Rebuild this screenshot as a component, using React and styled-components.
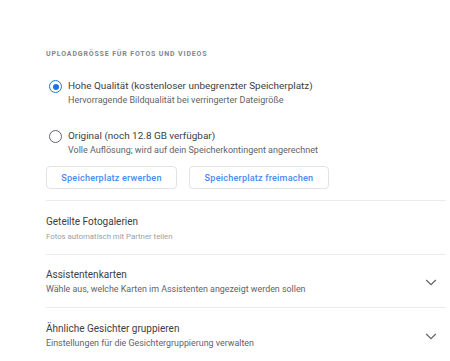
import React, { useState } from 'react';
import styled, { createGlobalStyle } from 'styled-components';

const GlobalStyle = createGlobalStyle`
  body {
    margin: 0;
    background: #ffffff;
    font-family: Roboto, "Liberation Sans", Arial, sans-serif;
  }
`;

const Page = styled.div`
  width: 450px;
  height: 361px;
  overflow: hidden;
  background: #fff;
  padding: 48px 4px 0 46px;
  box-sizing: border-box;
`;

const SectionTitle = styled.div`
  font-size: 7px;
  font-weight: 700;
  letter-spacing: 0.85px;
  color: #80868b;
  text-transform: uppercase;
  line-height: 12px;
`;

const OptionList = styled.div`
  display: flex;
  flex-direction: column;
  gap: 22px;
  margin-top: 18px;
`;

const Option = styled.label`
  display: flex;
  align-items: flex-start;
  gap: 6px;
  cursor: pointer;
`;

const Radio = styled.span`
  width: 13px;
  height: 13px;
  margin: 2px 0 0 3px;
  box-sizing: border-box;
  border-radius: 50%;
  border: 1.5px solid ${props => props.checked ? '#1a73e8' : '#5f6368'};
  display: flex;
  align-items: center;
  justify-content: center;
  flex-shrink: 0;

  &::after {
    content: '';
    width: 6px;
    height: 6px;
    border-radius: 50%;
    background: ${props => props.checked ? '#1a73e8' : 'transparent'};
  }
`;

const OptionText = styled.div`
  display: flex;
  flex-direction: column;
`;

const OptionTitle = styled.span`
  font-size: 9.95px;
  line-height: 16px;
  color: #3c4043;
`;

const OptionSub = styled.span`
  font-size: 9px;
  line-height: 12px;
  color: #5f6368;
`;

const Buttons = styled.div`
  display: flex;
  gap: 12px;
  margin-top: 10px;
  padding-bottom: 11px;
  border-bottom: 1px solid #ebebeb;
`;

const OutlineButton = styled.button`
  height: 23px;
  padding: 0;
  border: 1px solid #e3e3e3;
  border-radius: 4px;
  background: #fff;
  color: #4a89f3;
  font-family: inherit;
  font-size: 9.1px;
  font-weight: 500;
  letter-spacing: 0.2px;
  cursor: pointer;
`;

const SettingRow = styled.div`
  display: flex;
  align-items: center;
  justify-content: space-between;
  padding: ${props => props.top}px 0 11px;
  border-bottom: ${props => props.last ? 'none' : '1px solid #ebebeb'};
`;

const SettingText = styled.div`
  display: flex;
  flex-direction: column;
`;

const SettingTitle = styled.span`
  font-size: 10px;
  line-height: 16px;
  color: #3c4043;
`;

const SettingSub = styled.span`
  font-size: ${props => props.small ? 7.8 : 8.9}px;
  line-height: 13px;
  color: ${props => props.light ? '#9aa0a6' : '#5f6368'};
`;

const Chevron = styled.svg`
  width: 12px;
  height: 12px;
  margin-right: 9px;
  flex-shrink: 0;
`;

const ChevronDown = () => (
  <Chevron viewBox="0 0 12 12" fill="none">
    <path d="M1.2 4l4.8 4.6 4.8-4.6" stroke="#5f6368" strokeWidth="1.2" />
  </Chevron>
);

const options = [
  {
    id: 'high',
    title: 'Hohe Qualität (kostenloser unbegrenzter Speicherplatz)',
    sub: 'Hervorragende Bildqualität bei verringerter Dateigröße',
  },
  {
    id: 'original',
    title: 'Original (noch 12.8 GB verfügbar)',
    sub: 'Volle Auflösung; wird auf dein Speicherkontingent angerechnet',
  },
];

export default function App() {
  const [quality, setQuality] = useState('high');

  return (
    <>
      <GlobalStyle />
      <Page>
        <SectionTitle>Uploadgrösse für Fotos und Videos</SectionTitle>
        <OptionList>
          {options.map(o => (
            <Option key={o.id} onClick={() => setQuality(o.id)}>
              <Radio checked={quality === o.id} />
              <OptionText>
                <OptionTitle>{o.title}</OptionTitle>
                <OptionSub>{o.sub}</OptionSub>
              </OptionText>
            </Option>
          ))}
        </OptionList>
        <Buttons>
          <OutlineButton style={{ width: 131 }}>Speicherplatz erwerben</OutlineButton>
          <OutlineButton style={{ width: 140 }}>Speicherplatz freimachen</OutlineButton>
        </Buttons>
        <SettingRow top={13}>
          <SettingText>
            <SettingTitle>Geteilte Fotogalerien</SettingTitle>
            <SettingSub small light>Fotos automatisch mit Partner teilen</SettingSub>
          </SettingText>
        </SettingRow>
        <SettingRow top={12}>
          <SettingText>
            <SettingTitle>Assistentenkarten</SettingTitle>
            <SettingSub>Wähle aus, welche Karten im Assistenten angezeigt werden sollen</SettingSub>
          </SettingText>
          <ChevronDown />
        </SettingRow>
        <SettingRow top={13} last>
          <SettingText>
            <SettingTitle>Ähnliche Gesichter gruppieren</SettingTitle>
            <SettingSub>Einstellungen für die Gesichtergruppierung verwalten</SettingSub>
          </SettingText>
          <ChevronDown />
        </SettingRow>
      </Page>
    </>
  );
}
